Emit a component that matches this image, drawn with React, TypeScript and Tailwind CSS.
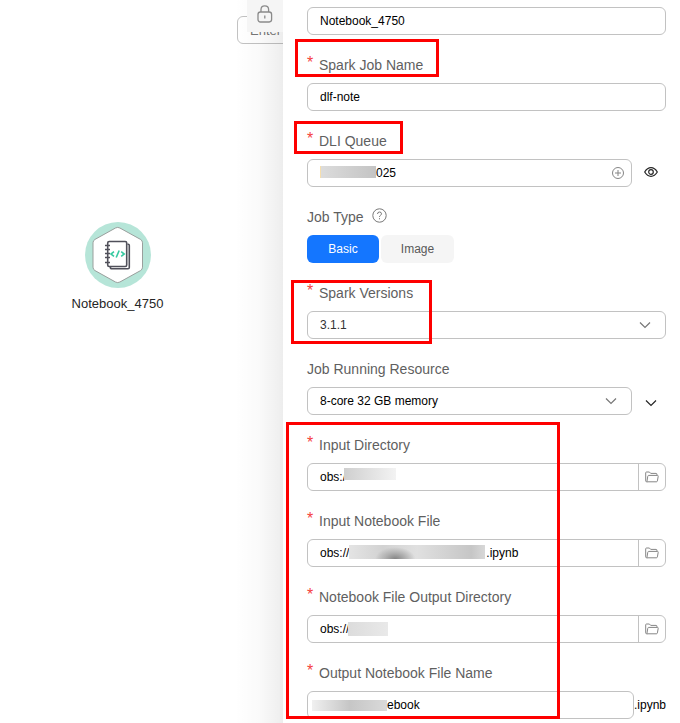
import type { ReactNode } from "react";

interface FieldProps {
  id?: string;
  label: string;
  required?: boolean;
  help?: ReactNode;
  children: ReactNode;
}

const Field = ({ id, label, required, help, children }: FieldProps) => {
  return (
    <div>
      <div className="flex h-12 items-center pt-3 text-sm text-[#5f5f5f]">
        {required && (
          <span className="w-3 shrink-0 pb-1 text-base leading-4 text-[#f5413d]">*</span>
        )}
        <label htmlFor={id} className="whitespace-nowrap">
          {label}
        </label>
        {help}
      </div>
      {children}
    </div>
  );
};

interface TextBoxProps {
  id: string;
  value: string;
  label?: string;
  before?: ReactNode;
  after?: ReactNode;
  className?: string;
}

const TextBox = ({ id, value, label, before, after, className = "pl-3" }: TextBoxProps) => {
  return (
    <div
      className={`flex h-7 min-w-0 flex-1 items-center overflow-hidden rounded-md border border-[#c2c2c2] bg-white text-xs text-black ${className}`}
    >
      {before}
      <input
        id={id}
        aria-label={label}
        defaultValue={value}
        className="h-full min-w-0 flex-1 bg-transparent outline-none"
      />
      {after}
    </div>
  );
};

interface SelectBoxProps {
  id: string;
  options: string[];
  className?: string;
}

const SelectBox = ({ id, options, className = "" }: SelectBoxProps) => {
  return (
    <div className="relative flex-1">
      <select
        id={id}
        className={`block h-7 w-full appearance-none rounded-md border border-[#c2c2c2] bg-white pl-3 pr-10 text-xs outline-none ${className}`}
      >
        {options.map((opt) => (
          <option key={opt}>{opt}</option>
        ))}
      </select>
      <Chevron className="pointer-events-none absolute top-2 right-[15px] text-[#777]" />
    </div>
  );
};

const Chevron = ({ className = "" }: { className?: string }) => (
  <svg width="12" height="12" viewBox="0 0 12 12" fill="none" stroke="currentColor" strokeWidth="1.2" className={className}>
    <path d="M1 3.5 6 8.5 11 3.5" />
  </svg>
);

const FolderButton = ({ label }: { label: string }) => (
  <button
    type="button"
    aria-label={label}
    className="flex h-full w-[27px] shrink-0 items-center justify-center border-l border-[#c2c2c2] text-[#868686]"
  >
    <svg width="14" height="12" viewBox="0 0 14 12" fill="none" stroke="currentColor" strokeLinejoin="round">
      <path d="M2.3 10.8H1.6Q.7 10.8.7 9.9V1.8Q.7 1 1.5 1H4.4L5.7 2.4H11Q11.9 2.4 11.9 3.2V4.3" />
      <path d="M3.7 4.4H12.4Q13.4 4.4 13.2 5.4L12.4 9.9Q12.2 10.8 11.4 10.8H2.3Q1.8 10.8 2 10L2.8 5.2Q3 4.4 3.7 4.4Z" />
    </svg>
  </button>
);

const Frame = ({ className }: { className: string }) => (
  <div className={`pointer-events-none absolute z-10 border-3 border-[#fe0000] ${className}`} />
);

const LockIcon = () => (
  <svg width="16" height="18" viewBox="0 0 16 18" fill="none" stroke="#8a8a8a" strokeWidth="1.3">
    <rect x="1" y="7" width="13.6" height="10" rx="2.4" />
    <path d="M4 7V4.6Q4 .8 7.8 .8T11.6 4.6V7" />
    <path d="M7.8 10.5V13.5" />
  </svg>
);

const NotebookNode = () => (
  <svg width="66" height="66" viewBox="0 0 66 66" fill="none">
    <circle cx="33" cy="33" r="33" fill="#b6e5d8" />
    <path
      d="M30.500 6Q32.700 4.800 34.900 6L55.500 17.400Q57.500 18.500 57.500 20.800V45.200Q57.500 47.500 55.500 48.600L34.900 60Q32.700 61.200 30.500 60L10 48.600Q8 47.500 8 45.200V20.800Q8 18.500 10 17.400Z"
      fill="#fff"
      stroke="#9a9f9d"
    />
    <g stroke="#50505a" strokeWidth="1.6">
      <rect x="22.700" y="19.500" width="19" height="25" rx="1.500" />
      <path d="M42.500 22.200H43.200Q44.300 22.200 44.300 23.500V45.500Q44.300 46.800 43 46.800H27Q25.300 46.800 25.300 45" />
      <path d="M20 23.500H25M20 27.500H25M20 31.500H25M20 35.500H25M20 40.500H25" strokeWidth="1.400" />
    </g>
    <path
      d="M29 29.700 26 32 29 34.300M36.200 29.700 39.200 32 36.200 34.300M34.200 28.500 31.200 35.500"
      stroke="#35c9a0"
      strokeWidth="1.600"
    />
  </svg>
);

const Canvas = () => (
  <div className="relative w-[283px] shrink-0 overflow-hidden bg-white">
    <input
      aria-label="Search"
      placeholder="Enter a"
      className="absolute top-4 left-[237px] h-7 w-40 rounded-md border border-[#c2c2c2] pl-3 text-[13px] outline-none placeholder:text-[#777]"
    />
    <div className="pointer-events-none absolute inset-y-0 right-0 w-12 bg-linear-to-r from-black/0 via-black/2 to-black/7" />
    <button
      type="button"
      aria-label="Lock"
      className="absolute top-0 right-0 flex h-8 w-9 items-start justify-center bg-[#f5f5f5] pt-[5px]"
    >
      <LockIcon />
    </button>
    <div className="absolute top-[222px] left-[57px] flex w-[121px] flex-col items-center gap-1.5">
      <NotebookNode />
      <span className="text-[13px] leading-5 text-[#252525]">Notebook_4750</span>
    </div>
  </div>
);

export default function App() {
  return (
    <div
      className="flex min-h-screen bg-white"
      style={{ fontFamily: '"Liberation Sans", Arial, sans-serif' }}
    >
      <Canvas />
      <form className="min-w-0 flex-1 bg-white pt-[7px] pr-[14px] pb-1 pl-6">
        <div className="flex">
          <TextBox id="node-name" label="Node Name" value="Notebook_4750" />
        </div>

        <div className="relative">
          <Frame className="top-1 -left-3 h-[38px] w-36" />
          <Field id="job-name" label="Spark Job Name" required>
            <div className="flex">
              <TextBox id="job-name" value="dlf-note" />
            </div>
          </Field>
        </div>

        <div className="relative">
          <Frame className="top-2.5 -left-[13px] h-[33px] w-[109px]" />
          <Field id="queue" label="DLI Queue" required>
            <div className="flex">
              <TextBox
                id="queue"
                value="025"
                before={
                  <span className="mb-0.5 h-3 w-14 shrink-0 border-l border-[#f6dfae] bg-linear-to-r from-[#dcdcdc] to-[#c4c4c4]" />
                }
                after={
                  <button type="button" aria-label="Add queue" className="mr-[7px] text-[#858585]">
                    <svg width="12" height="12" viewBox="0 0 12 12" fill="none" stroke="currentColor">
                      <circle cx="6" cy="6" r="5.5" />
                      <path d="M6 3V9M3 6H9" />
                    </svg>
                  </button>
                }
              />
              <button
                type="button"
                aria-label="View queue"
                className="flex w-[34px] shrink-0 items-center justify-center pb-0.5 pl-1 text-[#252525]"
              >
                <svg width="14" height="10" viewBox="0 0 14 10" fill="none" stroke="currentColor" strokeWidth="1.2">
                  <path d="M.7 5Q3.300 .7 7 .7T13.300 5Q10.700 9.300 7 9.300T.7 5Z" />
                  <circle cx="7" cy="5" r="2.300" />
                </svg>
              </button>
            </div>
          </Field>
        </div>

        <Field
          label="Job Type"
          help={
            <button type="button" aria-label="Help" className="ml-2 pb-1 text-[#777]">
              <svg width="15" height="15" viewBox="0 0 15 15" fill="none" stroke="currentColor">
                <circle cx="7.500" cy="7.500" r="6.700" />
                <path d="M5.500 6Q5.500 4 7.500 4T9.500 5.800Q9.500 6.800 8.400 7.400 7.500 7.900 7.500 8.900M7.500 10.200V11.300" />
              </svg>
            </button>
          }
        >
          <div className="flex gap-0.5 text-xs">
            <button type="button" className="h-7 w-18 rounded-md bg-[#1476ff] text-white">
              Basic
            </button>
            <button type="button" className="h-7 w-[73px] rounded-md bg-[#f5f5f5] text-[#595959]">
              Image
            </button>
          </div>
        </Field>

        <div className="relative">
          <Frame className="top-[17px] -left-4 h-16 w-[141px]" />
          <Field id="spark-version" label="Spark Versions" required>
            <SelectBox id="spark-version" options={["3.1.1"]} className="text-[#333]" />
          </Field>
        </div>

        <Field id="resource" label="Job Running Resource">
          <div className="flex">
            <SelectBox id="resource" options={["8-core 32 GB memory"]} className="text-black" />
            <button
              type="button"
              aria-label="Expand"
              className="flex w-[34px] shrink-0 items-center justify-center pt-1 pl-1 text-[#252525]"
            >
              <Chevron />
            </button>
          </div>
        </Field>

        <div className="relative">
          <Frame className="top-[7px] -left-[21px] h-[297px] w-[274px]" />
          <Field id="input-dir" label="Input Directory" required>
            <div className="flex">
              <TextBox
                id="input-dir"
                value=""
                before={
                  <>
                    <span>obs:/</span>
                    <span className="-ml-0.5 mb-1.5 h-3 w-[52px] shrink-0 bg-linear-to-r from-[#cfcfcf] to-[#f3f3f3]" />
                  </>
                }
                after={<FolderButton label="Browse input directory" />}
              />
            </div>
          </Field>
          <Field id="input-file" label="Input Notebook File" required>
            <div className="flex">
              <TextBox
                id="input-file"
                value=".ipynb"
                before={
                  <>
                    <span>obs://</span>
                    <span className="mr-px mb-0.5 h-3.5 w-[136px] shrink-0 bg-[radial-gradient(ellipse_20px_12px_at_34%_100%,#858585_0%,#b0b0b0_50%,transparent_100%),linear-gradient(to_right,#e4e4e4,#d2d2d2_25%,#e0e0e0_50%,#c6c6c6_90%,#d8d8d8)]" />
                  </>
                }
                after={<FolderButton label="Browse notebook file" />}
              />
            </div>
          </Field>
          <Field id="output-dir" label="Notebook File Output Directory" required>
            <div className="flex">
              <TextBox
                id="output-dir"
                value=""
                before={
                  <>
                    <span>obs://</span>
                    <span className="-ml-px h-3.5 w-10 shrink-0 bg-linear-to-r from-[#dcdcdc] to-[#e9e9e9]" />
                  </>
                }
                after={<FolderButton label="Browse output directory" />}
              />
            </div>
          </Field>
          <Field id="output-file" label="Output Notebook File Name" required>
            <div className="flex items-center text-xs">
              <TextBox
                id="output-file"
                value="ebook"
                className="pl-1"
                before={
                  <span className="h-[11px] w-[75px] shrink-0 bg-linear-to-r from-[#f0f0f0] via-[#c6c6c6] to-[#dadada]" />
                }
              />
              <label htmlFor="output-file" className="text-black">
                .ipynb
              </label>
            </div>
          </Field>
        </div>
      </form>
    </div>
  );
}
